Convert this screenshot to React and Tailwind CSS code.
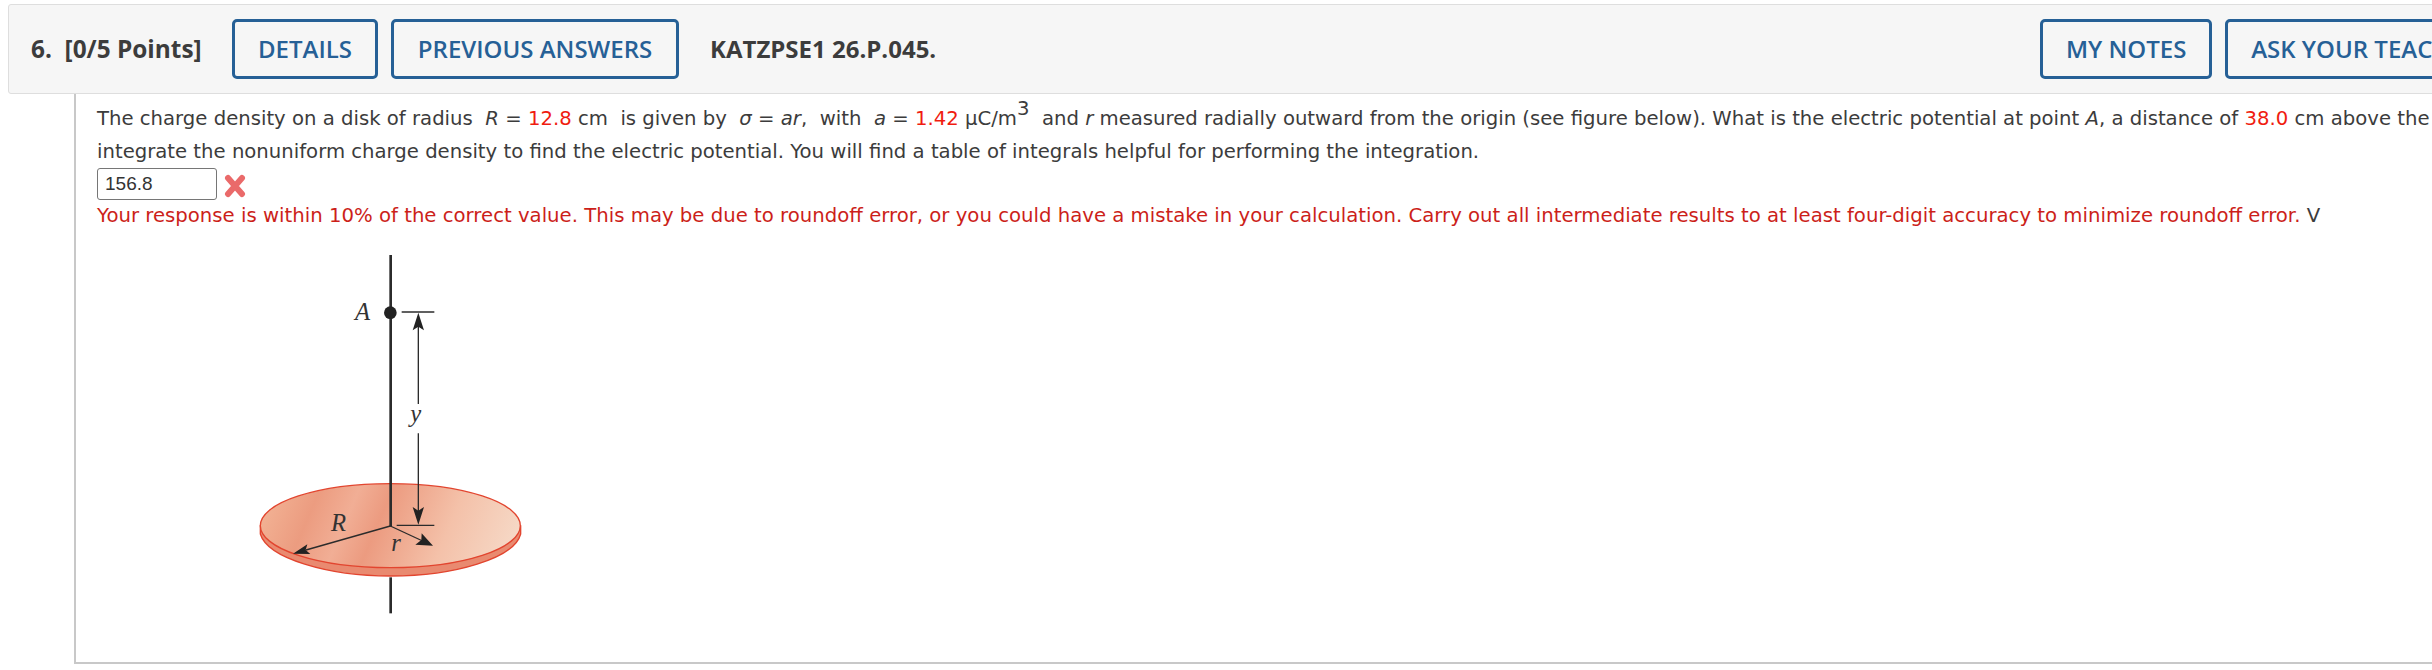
const HeaderButton = ({ children, className = "" }) => (
  <button
    className={`h-[60px] shrink-0 rounded-[5px] border-[3px] border-[#266096] bg-transparent text-[24px] font-semibold text-[#266096] ${className}`}
  >
    {children}
  </button>
);

const Red = ({ children }) => <span className="text-[#f01c10]">{children}</span>;

const Disk = () => (
  <svg width="320" height="390" viewBox="0 0 960 1170" className="block">
    <defs>
      <linearGradient id="disk" x1="120" y1="700" x2="830" y2="1000" gradientUnits="userSpaceOnUse">
        <stop offset="0" stopColor="#f3b597" />
        <stop offset="0.2" stopColor="#ec9c80" />
        <stop offset="0.34" stopColor="#f1ae95" />
        <stop offset="0.46" stopColor="#ec9b80" />
        <stop offset="0.72" stopColor="#f4c1a9" />
        <stop offset="1" stopColor="#f6dac8" />
      </linearGradient>
    </defs>
    <line x1="479" y1="1012" x2="479" y2="1120" stroke="#2b2b2b" strokeWidth="8" />
    <path
      d="M88 858 V882 C110 955 290 1008 479 1008 C670 1008 850 955 869 882 V858 Z"
      fill="#e98a70"
      stroke="#e2452f"
      strokeWidth="4"
    />
    <ellipse cx="478" cy="857" rx="390" ry="126" fill="url(#disk)" stroke="#e2452f" strokeWidth="4" />
    <line x1="479" y1="45" x2="479" y2="860" stroke="#2b2b2b" strokeWidth="8" />
    <circle cx="478" cy="218" r="19" fill="#222" />
    <line x1="512" y1="216" x2="610" y2="216" stroke="#2b2b2b" strokeWidth="4" />
    <line x1="497" y1="856" x2="610" y2="856" stroke="#2b2b2b" strokeWidth="4" />
    <line x1="562" y1="250" x2="562" y2="492" stroke="#2b2b2b" strokeWidth="4" />
    <line x1="562" y1="580" x2="562" y2="820" stroke="#2b2b2b" strokeWidth="4" />
    <path d="M562 218 L579 271 L562 260 L545 271 Z" fill="#222" />
    <path d="M562 854 L545 801 L562 812 L579 801 Z" fill="#222" />
    <line x1="478" y1="858" x2="225" y2="930" stroke="#2b2b2b" strokeWidth="4" />
    <path d="M186 941 L229 913 L224 930 L238 942 Z" fill="#222" />
    <line x1="478" y1="858" x2="575" y2="903" stroke="#2b2b2b" strokeWidth="4" />
    <path d="M606 917 L553 914 L571 900 L572 880 Z" fill="#222" />
    <g fill="#333" fontFamily="'Liberation Serif', serif" fontStyle="italic" fontSize="74">
      <text x="372" y="240">A</text>
      <text x="538" y="545">y</text>
      <text x="300" y="872">R</text>
      <text x="481" y="934">r</text>
    </g>
  </svg>
);

export default function App() {
  return (
    <div className="h-[670px] w-[2432px] overflow-hidden bg-white pl-2 pt-1 text-[#3c3c3c] [font-family:'DejaVu_Sans',sans-serif]">
      <div className="flex h-[90px] w-[2500px] items-center rounded-[3px] border border-[#dedede] bg-[#f6f6f6] pl-[22px] [font-family:'Open_Sans',sans-serif]">
        <span className="w-[201px] text-[24.4px] font-bold">6.&nbsp; [0/5 Points]</span>
        <HeaderButton className="w-[146px]">DETAILS</HeaderButton>
        <HeaderButton className="ml-[13px] w-[288px]">PREVIOUS ANSWERS</HeaderButton>
        <span className="ml-[31px] text-[24px] font-bold">KATZPSE1 26.P.045.</span>
        <HeaderButton className="ml-[1104px] w-[172px]">MY NOTES</HeaderButton>
        <HeaderButton className="ml-[13px] w-[280px]">ASK YOUR TEACHER</HeaderButton>
      </div>
      <div className="ml-[66px] h-[570px] w-[2400px] border-b-2 border-l-2 border-[#c8c8c8] pl-[21px] pt-2 text-[19.66px]">
        <p className="whitespace-nowrap leading-[33px]">
          The charge density on a disk of radius&nbsp; <i>R</i> = <Red>12.8</Red> cm&nbsp; is given by&nbsp;{" "}
          <i>σ</i> = <i>ar</i>,&nbsp; with&nbsp; <i>a</i> = <Red>1.42</Red> μC/m
          <sup className="text-[1em] leading-none">3</sup>&nbsp; and <i>r</i> measured radially outward from the origin
          (see figure below). What is the electric potential at point <i>A</i>, a distance of <Red>38.0</Red> cm above
          the
        </p>
        <p className="whitespace-nowrap leading-[33px]">
          integrate the nonuniform charge density to find the electric potential. You will find a table of integrals
          helpful for performing the integration.
        </p>
        <div className="flex h-[32px] items-center">
          <input
            readOnly
            value="156.8"
            className="h-[32px] w-[120px] rounded-[3px] border border-[#767676] px-[7px] text-[19px] text-[#333] [font-family:'Liberation_Sans',sans-serif]"
          />
          <svg width="22" height="24" viewBox="0 0 22 24" className="ml-[7px] mt-[4px]">
            <path d="M4 4 L18 20 M18 4 L4 20" stroke="#ea6a6a" strokeWidth="6" strokeLinecap="round" />
          </svg>
        </div>
        <p className="-mt-px whitespace-nowrap text-[19.7px] leading-[33px]">
          <span className="text-[#cc1f1a]">
            Your response is within 10% of the correct value. This may be due to roundoff error, or you could have a
            mistake in your calculation. Carry out all intermediate results to at least four-digit accuracy to minimize
            roundoff error.
          </span>{" "}
          V
        </p>
        <div className="ml-[134px] mt-[8px]">
          <Disk />
        </div>
      </div>
    </div>
  );
}
